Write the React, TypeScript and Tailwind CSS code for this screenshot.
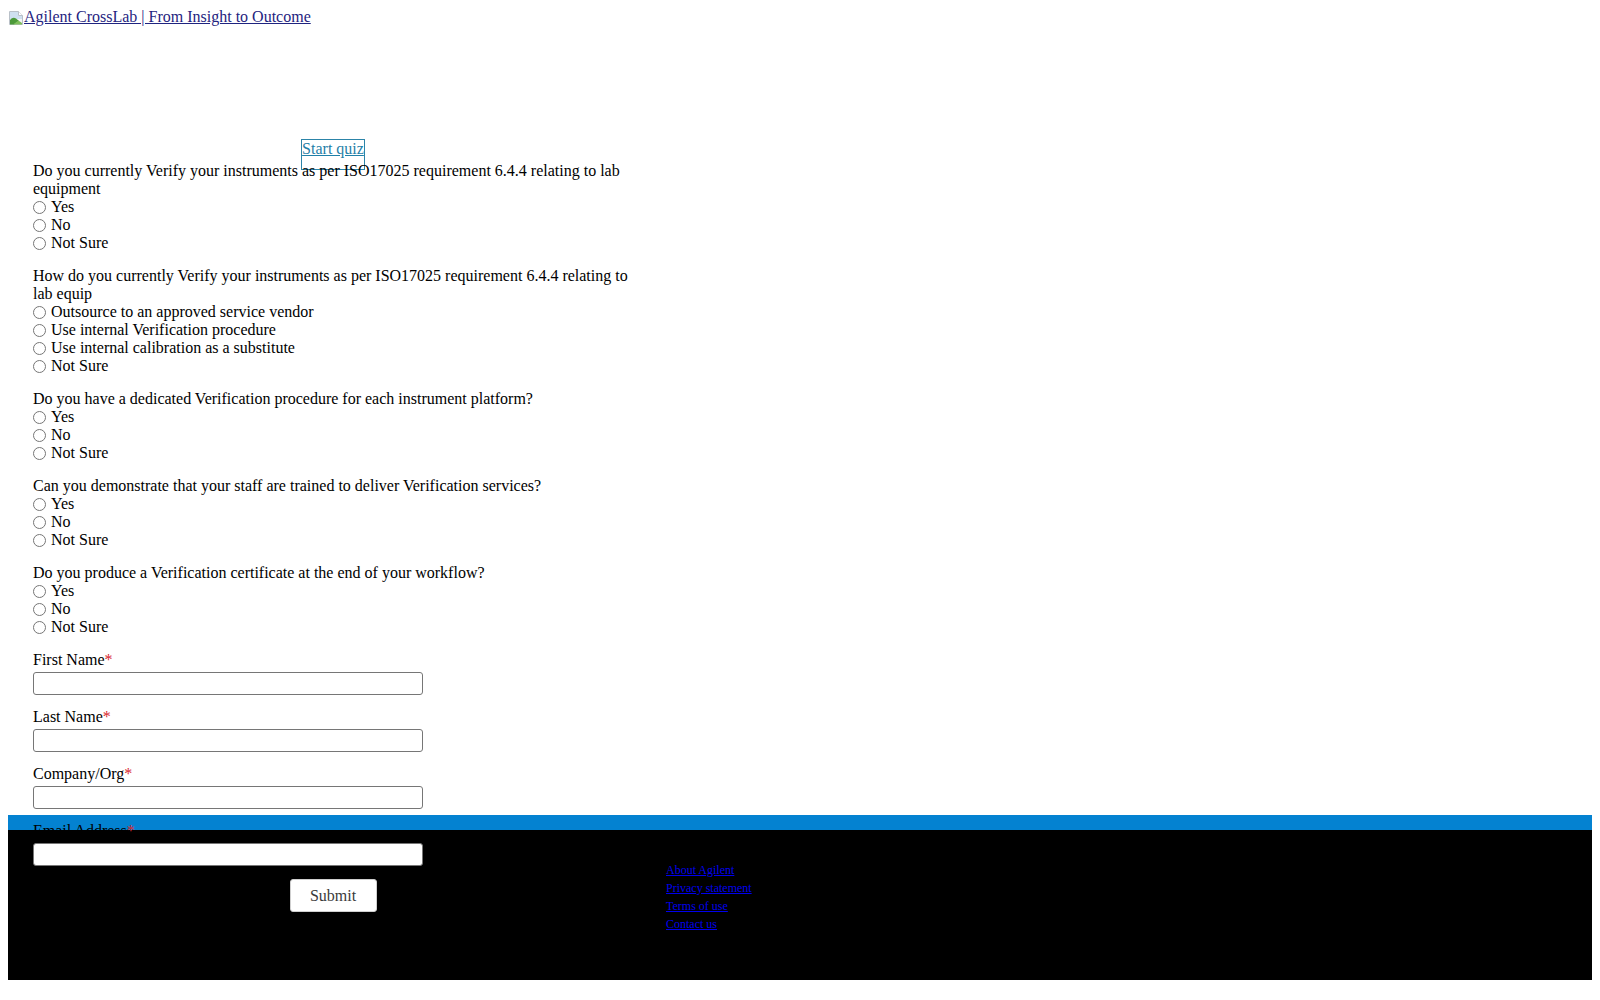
import React from 'react'

// Quiz questions, rendered in order
const questions = [
    {
        id: 'verify',
        text: 'Do you currently Verify your instruments as per ISO17025 requirement 6.4.4 relating to lab equipment',
        options: ['Yes', 'No', 'Not Sure'],
    },
    {
        id: 'how',
        text: 'How do you currently Verify your instruments as per ISO17025 requirement 6.4.4 relating to lab equip',
        options: [
            'Outsource to an approved service vendor',
            'Use internal Verification procedure',
            'Use internal calibration as a substitute',
            'Not Sure',
        ],
    },
    {
        id: 'procedure',
        text: 'Do you have a dedicated Verification procedure for each instrument platform?',
        options: ['Yes', 'No', 'Not Sure'],
    },
    {
        id: 'staff',
        text: 'Can you demonstrate that your staff are trained to deliver Verification services?',
        options: ['Yes', 'No', 'Not Sure'],
    },
    {
        id: 'certificate',
        text: 'Do you produce a Verification certificate at the end of your workflow?',
        options: ['Yes', 'No', 'Not Sure'],
    },
]

const fields = ['First Name', 'Last Name', 'Company/Org', 'Email Address']

const footerLinks = ['About Agilent', 'Privacy statement', 'Terms of use', 'Contact us']

// Chrome style "broken image" glyph shown before the alt text
const BrokenImage = () => (
    <svg width="16" height="16" viewBox="0 0 16 16" className="shrink-0">
        <path d="M1.5 1.5h9l4 4v9h-13z" fill="#f4f6f8" stroke="#b9c0c8" />
        <path d="M2 2h8.5v4H14v3L2 9z" fill="#cfe0f0" />
        <path d="M2 14.5V10c2-2.5 4-3 6-1.5L11 11l-5 3.5z" fill="#4c9a3a" />
        <path d="M5 14.5L10.5 10.5 14 13v1.5z" fill="#7fbf5a" />
        <path d="M10.5 1.5v4h4" fill="#fff" stroke="#b9c0c8" />
    </svg>
)

export default function App() {
    return (
        <div className="relative min-h-[1000px] bg-white p-2 font-['Liberation_Serif','Times_New_Roman',serif] text-[16px] leading-[normal] text-black">

            {/* Logo link (image failed to load, alt text shown) */}
            <a href="#" className="flex h-[18px] items-end text-[#1f2480] underline">
                <BrokenImage />
                <span>Agilent CrossLab | From Insight to Outcome</span>
            </a>

            {/* Quiz form */}
            <div className="relative z-10 w-[650px] px-[25px]">
                {/* Start quiz button, overlaps first question */}
                <div className="mt-[113px] flex h-[23px] justify-center">
                    <a href="#" className="h-[31px] border border-[#2c84a8] text-[#1f80a8] underline">
                        Start quiz
                    </a>
                </div>

                {questions.map((q) => (
                    <div key={q.id} className="mb-[15px]">
                        <p>{q.text}</p>
                        {q.options.map((opt) => (
                            <label key={opt} className="flex h-[18px] items-center">
                                <input type="radio" name={q.id} className="mr-[5px] h-[13px] w-[13px]" />
                                <span>{opt}</span>
                            </label>
                        ))}
                    </div>
                ))}

                {fields.map((f) => (
                    <div key={f} className="mb-[13px]">
                        <label className="block">
                            {f}<span className="text-[#d8262d]">*</span>
                        </label>
                        <input
                            type="text"
                            className="mt-[3px] block h-[23px] w-[390px] rounded-[3px] border border-[#767676] bg-white px-1"
                        />
                    </div>
                ))}

                <div className="mt-[4px] flex justify-center">
                    <button className="h-[33px] w-[87px] rounded-[3px] border border-[#cfcfcf] bg-white text-[#3a3a3a]">
                        Submit
                    </button>
                </div>
            </div>

            {/* Footer sits behind the bottom of the form */}
            <footer className="absolute left-2 right-2 top-[815px] z-0 h-[165px]">
                <div className="h-[15px] bg-[#0482d1]" />
                <div className="flex h-[150px] bg-black">
                    <div className="w-[658px] shrink-0" />
                    <ul className="pt-[31px] text-[12px] leading-[18px]">
                        {footerLinks.map((l) => (
                            <li key={l}>
                                <a href="#" className="text-[#0000ee] underline">{l}</a>
                            </li>
                        ))}
                    </ul>
                </div>
            </footer>
        </div>
    )
}
